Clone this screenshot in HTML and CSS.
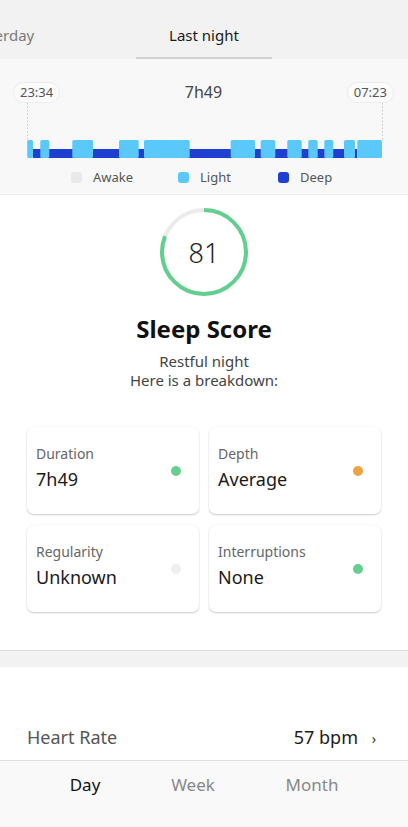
FILE: index.html
```html
<!DOCTYPE html>
<html>
<head>
<meta charset="utf-8">
<link rel="stylesheet" href="styles.css">
</head>
<body>
<div class="app">
  <div class="tabs">
    <div class="tab tab-prev">Yesterday</div>
    <div class="tab tab-active">Last night</div>
  </div>

  <section class="chart">
    <div class="chart-head">
      <span class="pill">23:34</span>
      <span class="total">7h49</span>
      <span class="pill">07:23</span>
    </div>
    <svg class="hypno" width="408" height="55" viewBox="0 0 408 55">
      <line x1="27.5" y1="0" x2="27.5" y2="37" stroke="#c8c8c8" stroke-width="1" stroke-dasharray="1.5 2"/>
      <line x1="382.5" y1="0" x2="382.5" y2="37" stroke="#c8c8c8" stroke-width="1" stroke-dasharray="1.5 2"/>
      <rect x="27" y="37" width="1" height="18" fill="#e6e6e6"/>
      <rect x="33" y="46" width="324" height="9" fill="#1e3fd0"/>
      <g fill="#5ac8fa">
        <rect x="27.3" y="37" width="5.7" height="18" rx="1.5"/>
        <rect x="40.3" y="37" width="9" height="18" rx="1.5"/>
        <rect x="72.3" y="37" width="20.7" height="18" rx="1.5"/>
        <rect x="119" y="37" width="19.7" height="18" rx="1.5"/>
        <rect x="144" y="37" width="45.7" height="18" rx="1.5"/>
        <rect x="230.7" y="37" width="24.3" height="18" rx="1.5"/>
        <rect x="260.7" y="37" width="14.6" height="18" rx="1.5"/>
        <rect x="287.3" y="37" width="14.4" height="18" rx="1.5"/>
        <rect x="308.3" y="37" width="9.4" height="18" rx="1.5"/>
        <rect x="324.3" y="37" width="9" height="18" rx="1.5"/>
        <rect x="344" y="37" width="11" height="18" rx="1.5"/>
        <rect x="357.3" y="37" width="24.7" height="18" rx="1.5"/>
      </g>
    </svg>
    <div class="legend">
      <span class="legend-item"><i class="sw sw-awake"></i>Awake</span>
      <span class="legend-item"><i class="sw sw-light"></i>Light</span>
      <span class="legend-item"><i class="sw sw-deep"></i>Deep</span>
    </div>
  </section>

  <section class="score">
    <div class="ring">
      <svg width="88" height="88" viewBox="0 0 88 88">
        <circle cx="44" cy="44" r="42" fill="none" stroke="#ebebeb" stroke-width="4"/>
        <circle cx="44" cy="44" r="42" fill="none" stroke="#63cf8e" stroke-width="4" stroke-dasharray="213.8 300" transform="rotate(-90 44 44)"/>
      </svg>
      <span class="ring-value">81</span>
    </div>
    <h1 class="score-title">Sleep Score</h1>
    <p class="score-sub">Restful night<br>Here is a breakdown:</p>

    <div class="cards">
      <div class="card">
        <div class="card-text"><div class="card-label">Duration</div><div class="card-value">7h49</div></div>
        <span class="dot dot-green"></span>
      </div>
      <div class="card">
        <div class="card-text"><div class="card-label">Depth</div><div class="card-value">Average</div></div>
        <span class="dot dot-orange"></span>
      </div>
      <div class="card">
        <div class="card-text"><div class="card-label">Regularity</div><div class="card-value">Unknown</div></div>
        <span class="dot dot-grey"></span>
      </div>
      <div class="card">
        <div class="card-text"><div class="card-label">Interruptions</div><div class="card-value">None</div></div>
        <span class="dot dot-green"></span>
      </div>
    </div>
  </section>

  <div class="spacer-band"></div>

  <section class="metrics">
    <div class="metric-row">
      <span class="metric-name">Heart Rate</span>
      <span class="metric-value">57 bpm <span class="chev">›</span></span>
    </div>
  </section>

  <nav class="bottom-nav">
    <span class="nav-item nav-active">Day</span>
    <span class="nav-item">Week</span>
    <span class="nav-item">Month</span>
  </nav>
</div>
</body>
</html>
```

FILE: styles.css
```css
* { box-sizing: border-box; }
html, body { margin: 0; padding: 0; }
body {
  font-family: "Noto Sans", "Open Sans", sans-serif;
  background: #ffffff;
  color: #222;
  width: 408px;
  height: 827px;
  overflow: hidden;
}
.app { width: 408px; height: 827px; display: flex; flex-direction: column; }

.tabs {
  height: 59px;
  background: #f2f2f2;
  display: flex;
  align-items: flex-end;
  overflow: hidden;
}
.tab {
  width: 136px;
  flex: none;
  text-align: center;
  font-size: 15px;
  line-height: 22px;
  padding-bottom: 11px;
  border-bottom: 2px solid transparent;
  color: #7a7a7a;
}
.tab-prev { margin-left: -68px; margin-right: 68px; }
.tab-active { color: #1a1a1a; border-bottom-color: #d2d2d2; }

.chart {
  height: 136px;
  background: #f8f8f8;
  border-bottom: 1px solid #ececec;
  padding-top: 23px;
  display: flex;
  flex-direction: column;
}
.chart-head {
  display: flex;
  justify-content: space-between;
  align-items: center;
  padding: 0 14px 0 13px;
  height: 21px;
}
.pill {
  height: 21px;
  line-height: 19px;
  padding: 0 6px;
  border: 1px solid #ececec;
  background: #fbfbfb;
  border-radius: 11px;
  font-size: 13px;
  color: #555;
}
.total { font-size: 16px; color: #444; margin-top: -2px; }
.hypno { display: block; }
.legend {
  margin-top: 9px;
  height: 20px;
  display: flex;
  align-items: center;
  padding-left: 71px;
  font-size: 13px;
  color: #555;
}
.legend-item { display: flex; align-items: center; }
.legend-item:nth-child(1) { width: 107px; }
.legend-item:nth-child(2) { width: 100px; }
.sw { display: inline-block; width: 11px; height: 11px; border-radius: 3px; margin-right: 11px; }
.sw-awake { background: #e9e9e9; }
.sw-light { background: #5ac8fa; }
.sw-deep { background: #1e3fd0; }

.score {
  height: 456px;
  border-bottom: 1px solid #dedede;
  padding-top: 13px;
  display: flex;
  flex-direction: column;
  align-items: center;
}
.ring { position: relative; width: 88px; height: 88px; }
.ring svg { display: block; }
.ring-value {
  position: absolute;
  inset: 0;
  display: flex;
  align-items: center;
  justify-content: center;
  font-size: 27px;
  font-weight: 300;
  color: #222;
}
.score-title {
  margin: 18px 0 0;
  font-size: 24px;
  line-height: 30px;
  font-weight: 700;
  color: #111;
}
.score-sub {
  margin: 8px 0 0;
  font-size: 15px;
  line-height: 19px;
  text-align: center;
  color: #444;
}
.cards {
  margin-top: 37px;
  width: 100%;
  padding: 0 27px;
  display: grid;
  grid-template-columns: 172px 172px;
  column-gap: 10px;
  row-gap: 11px;
}
.card {
  height: 87px;
  background: #fff;
  border-radius: 7px;
  box-shadow: 0 1px 2px rgba(0,0,0,0.2), 0 0 2px rgba(0,0,0,0.05);
  display: flex;
  justify-content: space-between;
  align-items: flex-start;
  padding: 16px 18px 0 9px;
}
.card-label { font-size: 14px; line-height: 22px; color: #666; }
.card-value { font-size: 18px; line-height: 28px; color: #1a1a1a; }
.dot { width: 10px; height: 10px; border-radius: 50%; margin-top: 23px; }
.dot-green { background: #66cf8f; }
.dot-orange { background: #f0a243; }
.dot-grey { background: #efefef; }

.spacer-band { height: 16px; background: #f2f2f2; flex: none; }

.metrics {
  height: 94px;
  display: flex;
  flex-direction: column;
  justify-content: flex-end;
  border-bottom: 1px solid #e0e0e0;
}
.metric-row {
  height: 46px;
  display: flex;
  justify-content: space-between;
  align-items: center;
  padding: 0 32px 0 27px;
  margin-top: -2px;
}
.metric-name { font-size: 18px; color: #555; }
.metric-value { font-size: 18px; color: #1a1a1a; }
.chev { font-size: 14px; margin-left: 9px; color: #333; }

.bottom-nav {
  flex: 1;
  background: #f9f9f9;
  display: flex;
  align-items: flex-start;
  padding-top: 12px;
}
.nav-item {
  font-size: 17px;
  line-height: 24px;
  color: #888;
  text-align: center;
}
.nav-item:nth-child(1) { width: 170px; }
.nav-item:nth-child(2) { width: 46px; }
.nav-item:nth-child(3) { width: 192px; }
.nav-active { color: #111; }
```
